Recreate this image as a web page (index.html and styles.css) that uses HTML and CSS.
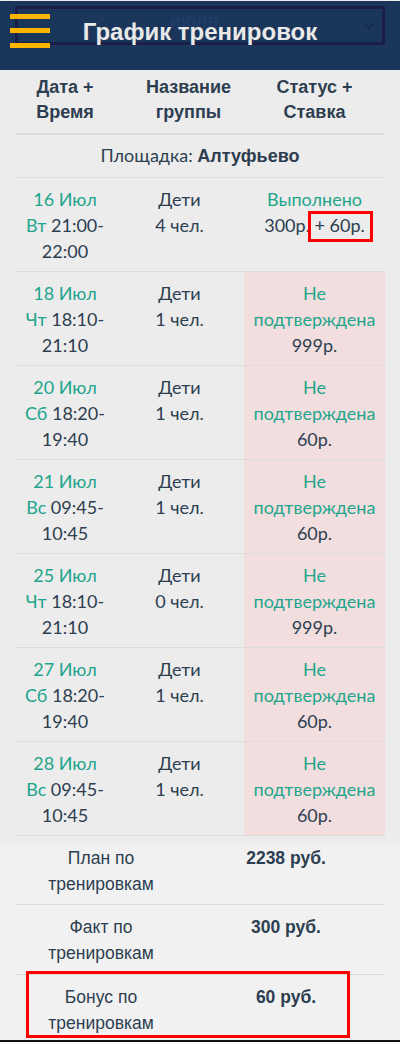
FILE: index.html
```html
<!DOCTYPE html>
<html lang="ru">
<head>
    <meta charset="UTF-8">
    <title>График тренировок</title>
    <link rel="stylesheet" href="styles.css">
</head>
<body>

    <div class="topbar">
        <div class="month-select">
            <span class="month-value">июля</span>
            <svg class="chevron" width="10" height="6" viewBox="0 0 10 6"><path d="M1 1 L5 5 L9 1" fill="none" stroke="#16284a" stroke-width="1.6"/></svg>
        </div>
        <div class="burger"><span></span><span></span><span></span></div>
        <div class="page-title">График тренировок</div>
    </div>

    <div class="schedule">
        <div class="head-row">
            <div class="cell">Дата +<br>Время</div>
            <div class="cell group-head">Название<br>группы</div>
            <div class="cell">Статус +<br>Ставка</div>
        </div>

        <div class="place-row">Площадка: <b>Алтуфьево</b></div>

        <div class="row">
            <div class="cell"><span class="date">16 Июл</span><span class="time"><span class="day">Вт</span> 21:00-22:00</span></div>
            <div class="cell">Дети<br>4 чел.</div>
            <div class="cell"><span class="ok">Выполнено</span><br>300р. <span class="marked">+ 60р.</span></div>
        </div>
        <div class="row">
            <div class="cell"><span class="date">18 Июл</span><span class="time"><span class="day">Чт</span> 18:10-21:10</span></div>
            <div class="cell">Дети<br>1 чел.</div>
            <div class="cell pending"><span class="ok">Не подтверждена</span><br>999р.</div>
        </div>
        <div class="row">
            <div class="cell"><span class="date">20 Июл</span><span class="time"><span class="day">Сб</span> 18:20-19:40</span></div>
            <div class="cell">Дети<br>1 чел.</div>
            <div class="cell pending"><span class="ok">Не подтверждена</span><br>60р.</div>
        </div>
        <div class="row">
            <div class="cell"><span class="date">21 Июл</span><span class="time"><span class="day">Вс</span> 09:45-10:45</span></div>
            <div class="cell">Дети<br>1 чел.</div>
            <div class="cell pending"><span class="ok">Не подтверждена</span><br>60р.</div>
        </div>
        <div class="row">
            <div class="cell"><span class="date">25 Июл</span><span class="time"><span class="day">Чт</span> 18:10-21:10</span></div>
            <div class="cell">Дети<br>0 чел.</div>
            <div class="cell pending"><span class="ok">Не подтверждена</span><br>999р.</div>
        </div>
        <div class="row">
            <div class="cell"><span class="date">27 Июл</span><span class="time"><span class="day">Сб</span> 18:20-19:40</span></div>
            <div class="cell">Дети<br>1 чел.</div>
            <div class="cell pending"><span class="ok">Не подтверждена</span><br>60р.</div>
        </div>
        <div class="row">
            <div class="cell"><span class="date">28 Июл</span><span class="time"><span class="day">Вс</span> 09:45-10:45</span></div>
            <div class="cell">Дети<br>1 чел.</div>
            <div class="cell pending"><span class="ok">Не подтверждена</span><br>60р.</div>
        </div>
    </div>

    <div class="totals">
        <div class="total-row first">
            <div class="label">План по тренировкам</div>
            <div class="sum">2238 руб.</div>
        </div>
        <div class="total-row">
            <div class="label">Факт по тренировкам</div>
            <div class="sum">300 руб.</div>
        </div>
        <div class="total-row bonus">
            <div class="label">Бонус по тренировкам</div>
            <div class="sum">60 руб.</div>
        </div>
    </div>
    <div class="bottom-line"></div>

</body>
</html>
```

FILE: styles.css
```css
body {
    margin: 0;
    background: #ececec;
    font-family: Lato, "Liberation Sans", sans-serif;
    color: #2c3e50;
}

/* верхняя панель */
.topbar {
    position: relative;
    margin-top: 1px;
    height: 69px;
    background: #1b365b;
    padding-top: 5px;
    box-sizing: border-box;
}
.month-select {
    margin: 0 15px;
    height: 39px;
    border: 3px solid #1c1f45;
    box-sizing: border-box;
    display: flex;
    align-items: center;
    justify-content: center;
    position: relative;
}
.month-value {
    font-family: "Liberation Sans", sans-serif;
    font-weight: bold;
    font-size: 18px;
    color: #203c68;
    margin-left: -12px;
    margin-top: -8px;
}
.chevron {
    position: absolute;
    right: 8px;
    top: 14px;
}
.burger {
    position: absolute;
    left: 10px;
    top: 13px;
    width: 40px;
}
.burger span {
    display: block;
    height: 5px;
    background: #ffb400;
    margin-bottom: 9px;
}
.burger span:nth-child(2) { margin-bottom: 10px; }
.page-title {
    position: absolute;
    left: 0;
    right: 0;
    top: 17px;
    text-align: center;
    font-family: "Liberation Sans", sans-serif;
    font-weight: bold;
    font-size: 24px;
    line-height: 28px;
    color: #e9e9e9;
}

/* таблица */
.schedule {
    margin: 0 15px;
}
.head-row,
.row {
    display: grid;
    grid-template-columns: 100px 129px 141px;
}
.head-row {
    border-bottom: 2px solid #dcdcdc;
    font-family: "Liberation Sans", sans-serif;
    font-weight: bold;
    font-size: 18px;
    line-height: 25px;
}
.head-row .cell {
    padding: 5px 4px 8px;
    text-align: center;
}
.head-row .group-head {
    padding-left: 22px;
}
.place-row {
    text-align: center;
    font-size: 18px;
    line-height: 25px;
    padding: 8px 0 8px;
    border-bottom: 1px solid #dcdcdc;
}
.place-row b {
    font-family: "Liberation Sans", sans-serif;
}
.row {
    border-bottom: 1px solid #dcdcdc;
    font-size: 18px;
    line-height: 26px;
}
.row .cell {
    padding: 8px 8px 7px;
    text-align: center;
    height: 78px;
}
.row .pending {
    background: #f2dede;
}
.date,
.time {
    display: block;
}
.date,
.day,
.ok {
    color: #1fa58c;
}
.marked {
    position: relative;
}
.marked::after {
    content: "";
    position: absolute;
    left: -7px;
    right: -8px;
    top: -3px;
    bottom: -6px;
    border: 3px solid #ff0000;
}

/* итоги */
.totals {
    margin-top: 7px;
    background: #f1f1f1;
    padding: 0 15px;
    font-family: "Liberation Sans", sans-serif;
    font-size: 17.5px;
    line-height: 26px;
}
.total-row {
    display: grid;
    grid-template-columns: 172px 198px;
    padding: 9px 0 8px;
    position: relative;
}
.total-row + .total-row {
    border-top: 1px solid #dcdcdc;
}
.total-row.first {
    padding: 2px 0 7px;
}
.total-row.bonus {
    padding-bottom: 4px;
}
.total-row .label {
    text-align: center;
    padding: 0 26px;
}
.total-row .sum {
    text-align: center;
    font-weight: bold;
}
.bonus::after {
    content: "";
    position: absolute;
    left: 11px;
    right: 35px;
    top: -4px;
    bottom: 2px;
    border: 3px solid #ff0000;
}
.bottom-line {
    height: 4px;
    background: #111;
}
```
